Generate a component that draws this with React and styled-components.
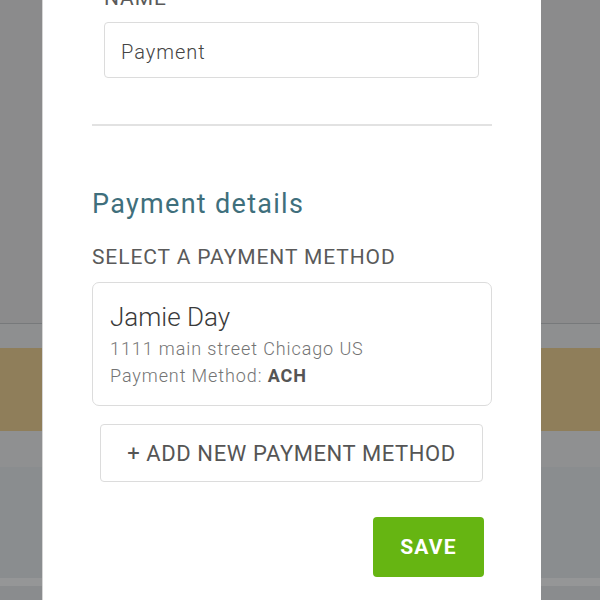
import styled, { createGlobalStyle } from 'styled-components';

const GlobalStyle = createGlobalStyle`
  html, body {
    margin: 0;
    padding: 0;
    overflow: hidden;
  }
  body {
    font-family: Roboto, "Liberation Sans", Arial, sans-serif;
  }
`;

const Page = styled.div`
  position: relative;
  width: 600px;
  height: 600px;
  overflow: hidden;
  display: flex;
  flex-direction: column;
  background: #8d8d8e;
`;

const Band = styled.div`
  height: ${(props) => props.h}px;
  background: ${(props) => props.bg};
  border-top: ${(props) => (props.line ? '1px solid #77797b' : 'none')};
  flex-shrink: 0;
`;

// modal sits over the dimmed page, its top scrolled out of view
const Modal = styled.div`
  position: absolute;
  top: -40px;
  left: 42px;
  width: 499px;
  height: 660px;
  box-sizing: border-box;
  background: #ffffff;
  border-left: 1px solid #d6d6d6;
  padding: 26px 49px 0 49px;
  display: flex;
  flex-direction: column;
`;

const NameGroup = styled.div`
  padding: 0 13px 0 12px;
  display: flex;
  flex-direction: column;
  gap: 12px;
`;

const Label = styled.div`
  font-size: 21px;
  font-weight: 400;
  color: #5a5a5a;
  text-transform: uppercase;
  letter-spacing: 0.9px;
  line-height: 24px;
`;

const Input = styled.input`
  height: 56px;
  box-sizing: border-box;
  border: 1px solid #dcdcdc;
  border-radius: 4px;
  padding: 4px 16px 0;
  font-family: Roboto, "Liberation Sans", Arial, sans-serif;
  font-size: 20px;
  font-weight: 300;
  letter-spacing: 1px;
  color: #444;
  outline: none;
`;

const Divider = styled.hr`
  margin: 46px 0 0;
  border: none;
  border-top: 2px solid #e2e2e2;
`;

const Heading = styled.h2`
  margin: 62px 0 0;
  font-size: 27px;
  font-weight: 400;
  letter-spacing: 1.3px;
  color: #3f6f7c;
  line-height: 32px;
`;

const SectionLabel = styled(Label)`
  margin-top: 25px;
`;

const Card = styled.div`
  margin-top: 13px;
  height: 124px;
  box-sizing: border-box;
  border: 1px solid #dcdcdc;
  border-radius: 7px;
  padding: 19px 17px;
  display: flex;
  flex-direction: column;
`;

const CardName = styled.div`
  font-size: 26px;
  font-weight: 300;
  color: #3a3a3a;
  line-height: 30px;
`;

const CardLine = styled.div`
  margin-top: ${(props) => props.gap || 0}px;
  font-size: 18px;
  font-weight: 300;
  letter-spacing: 0.9px;
  color: #747474;
  line-height: 27px;
  & b {
    font-weight: 700;
    color: #555;
  }
`;

const AddButton = styled.button`
  margin: 18px 9px 0 8px;
  height: 58px;
  background: #fff;
  border: 1px solid #dcdcdc;
  border-radius: 4px;
  font-family: Roboto, "Liberation Sans", Arial, sans-serif;
  font-size: 22px;
  letter-spacing: 0.6px;
  color: #555;
  text-transform: uppercase;
  cursor: pointer;
`;

const Actions = styled.div`
  margin-top: 35px;
  display: flex;
  justify-content: flex-end;
  padding-right: 8px;
`;

const SaveButton = styled.button`
  width: 111px;
  height: 60px;
  border: none;
  border-radius: 4px;
  background: #66b512;
  color: #fff;
  font-family: Roboto, "Liberation Sans", Arial, sans-serif;
  font-size: 21px;
  font-weight: 700;
  letter-spacing: 1.2px;
  cursor: pointer;
`;

const bands = [
  { h: 323, bg: '#8b8b8c' },
  { h: 24, bg: '#8e8f90', line: true },
  { h: 83, bg: '#8f7e5a' },
  { h: 36, bg: '#8f9091' },
  { h: 111, bg: '#8a8d8f' },
  { h: 8, bg: '#959697' },
  { h: 20, bg: '#8a8c8e' },
];

export default function App() {
  return (
    <>
      <GlobalStyle />
      <Page>
        {bands.map((b, i) => (
          <Band key={i} h={b.h} bg={b.bg} line={b.line} />
        ))}
        <Modal>
          <NameGroup>
            <Label>Name</Label>
            <Input defaultValue="Payment" />
          </NameGroup>
          <Divider />
          <Heading>Payment details</Heading>
          <SectionLabel>Select a payment method</SectionLabel>
          <Card>
            <CardName>Jamie Day</CardName>
            <CardLine gap={3}>1111 main street Chicago US</CardLine>
            <CardLine>
              Payment Method: <b>ACH</b>
            </CardLine>
          </Card>
          <AddButton>+ Add new payment method</AddButton>
          <Actions>
            <SaveButton>SAVE</SaveButton>
          </Actions>
        </Modal>
      </Page>
    </>
  );
}
